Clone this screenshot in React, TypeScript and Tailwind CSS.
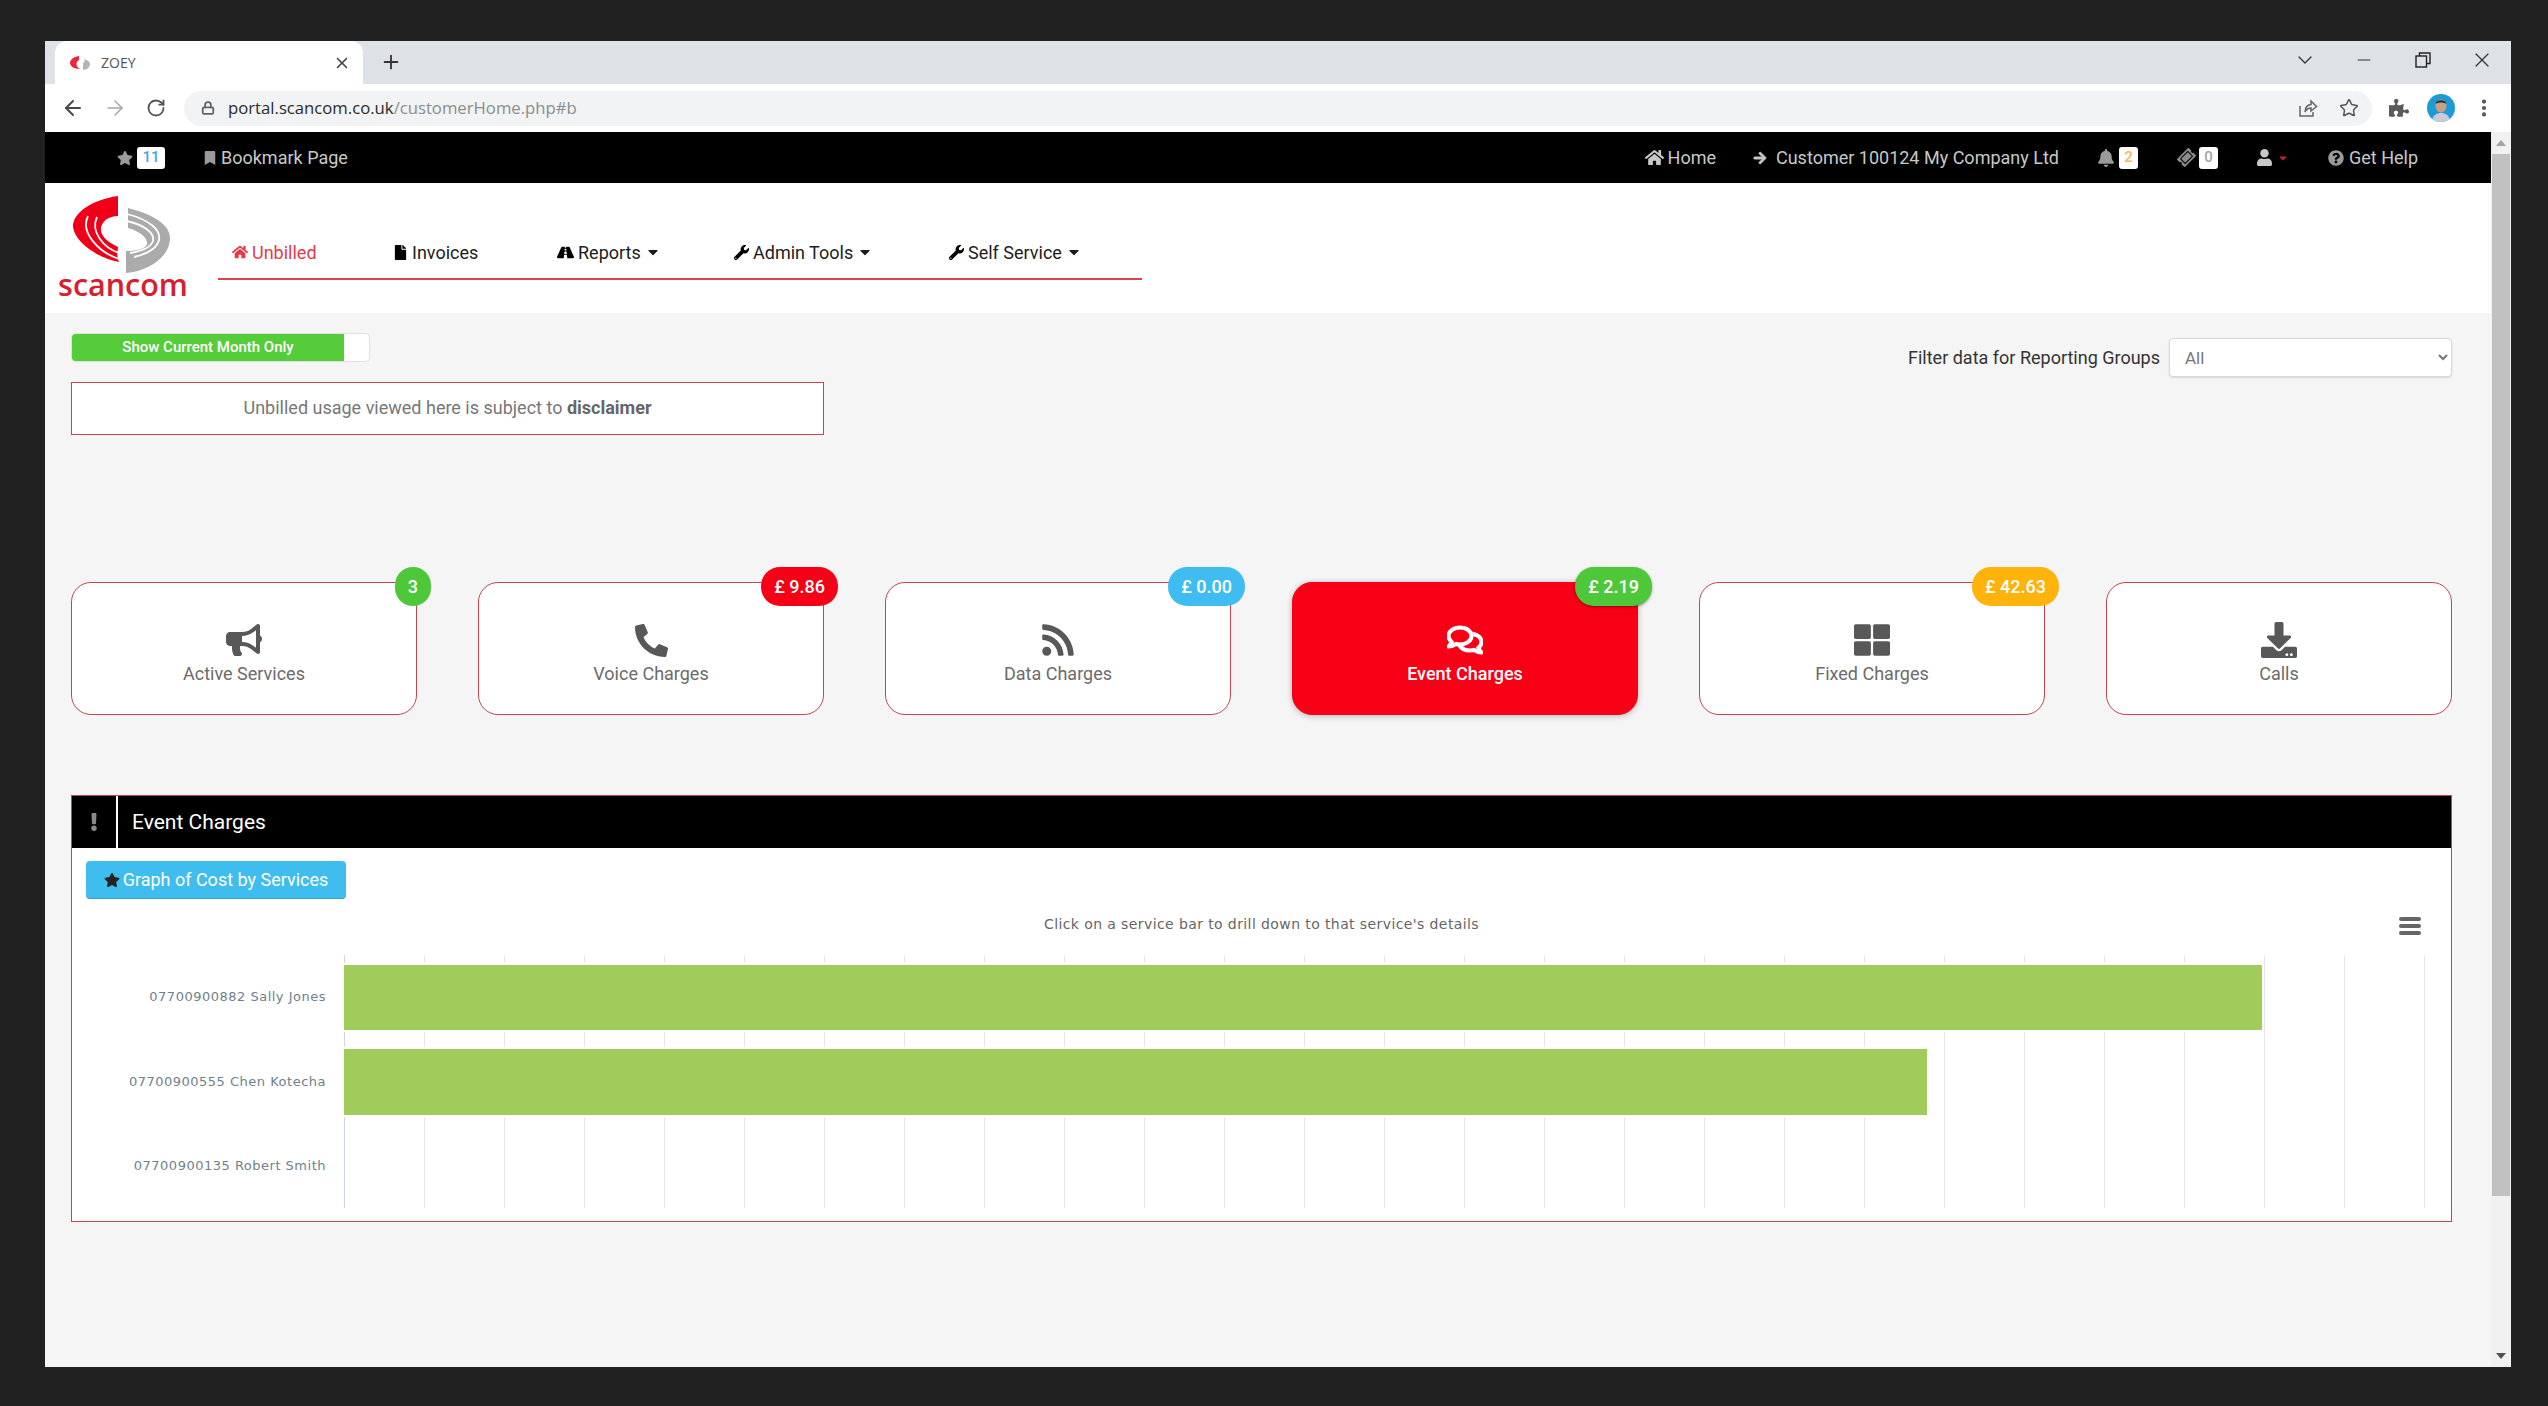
import React from "react";
import {
  FaStar, FaBookmark, FaHome, FaArrowRight, FaBell, FaTicketAlt, FaUser, FaCaretDown, FaQuestionCircle,
  FaFile, FaRoad, FaWrench, FaBullhorn, FaPhoneAlt, FaRss, FaRegComments, FaThLarge, FaDownload, FaPuzzlePiece, FaExclamation,
} from "react-icons/fa";
import { ArrowLeft, ArrowRight, RotateCw, Lock, Star, X, Plus, ChevronDown, Minus, EllipsisVertical } from "lucide-react";

function Logo() {
  return (
    <svg width="110" height="82" viewBox="18 4 110 82" className="block">
      <path d="M68 8 C40 12 23 26 23 38 C24 54 48 70 69 74 C66 68 68 62 68 59 C62 56 55 52 52 46 C48 38 55 28 68 28 Z" fill="#f00018" />
      <path d="M38 28 C30 44 48 64 69 71" fill="none" stroke="#fff" strokeWidth="1.8" />
      <path d="M47 29 C40 44 54 60 69 65" fill="none" stroke="#fff" strokeWidth="1.8" />
      <path d="M76 85 L76 63 C84 63 92 62 96 58 C100 52 92 44 78 40 L78 20 C102 26 120 36 120 50 C120 68 100 83 76 85 Z" fill="#ababab" />
      <path d="M77 26 C100 32 111 42 109 52 C107 60 97 66 84 69" fill="none" stroke="#fff" strokeWidth="1.8" />
      <path d="M77 33 C94 37 105 45 103 53 C101 59 92 63 80 65" fill="none" stroke="#fff" strokeWidth="1.8" />
    </svg>
  );
}

function Favicon() {
  return (
    <svg width="22" height="16" viewBox="0 0 22 16">
      <path d="M9 1 C3 2 0 5 0 8 C0 11 4 14 10 14 C6 12 5 7 9 5 Z" fill="#ef2436" />
      <path d="M13 15 L13 8 C15 7 15 5 14 4 C18 5 20 7 20 9 C20 12 17 15 13 15 Z" fill="#b5b5b5" />
    </svg>
  );
}

function CountBadge({ text, color }: { text: string; color: string }) {
  return (
    <span className={`flex h-[22px] min-w-[19px] items-center justify-center rounded-[3px] bg-white px-[4px] text-[15px] leading-none font-medium ${color}`}>
      {text}
    </span>
  );
}

function NavItem({ icon, label, caret, width, active }: { icon: React.ReactNode; label: string; caret?: boolean; width: string; active?: boolean }) {
  return (
    <div className={`flex items-center gap-[4px] text-[18px] ${width} ${active ? "text-[#e53a48]" : "text-[#1c1c1c]"}`}>
      {icon}
      <span>{label}</span>
      {caret && <FaCaretDown className="text-[16px]" />}
    </div>
  );
}

const cards = [
  { label: "Active Services", icon: <FaBullhorn />, badge: "3", badgeColor: "bg-[#4fc73a]" },
  { label: "Voice Charges", icon: <FaPhoneAlt className="text-[33px]" />, badge: "£ 9.86", badgeColor: "bg-[#f50016]" },
  { label: "Data Charges", icon: <FaRss />, badge: "£ 0.00", badgeColor: "bg-[#3fbdf0]" },
  { label: "Event Charges", icon: <FaRegComments stroke="currentColor" strokeWidth={18} />, badge: "£ 2.19", badgeColor: "bg-[#4fc73a]", active: true },
  { label: "Fixed Charges", icon: <FaThLarge />, badge: "£ 42.63", badgeColor: "bg-[#ffb30b]" },
  { label: "Calls", icon: <FaDownload />, badge: "", badgeColor: "" },
];

function Card({ c }: { c: (typeof cards)[number] }) {
  return (
    <div
      className={`relative flex h-[133px] flex-col items-center justify-center rounded-[20px] border-[1.5px] pt-[10px] ${
        c.active
          ? "border-[#f80016] bg-[#f80016] text-white font-medium shadow-[0_1px_6px_rgba(0,0,0,0.25)]"
          : "border-[#c8434f] bg-white text-[#6b6b6b]"
      }`}
    >
      <div className={`flex h-[36px] items-center justify-center text-[36px] ${c.active ? "text-white" : "text-[#585858]"}`}>{c.icon}</div>
      <div className="mt-[5px] text-[18px] leading-[22px]">{c.label}</div>
      {c.badge && (
        <div className={`absolute top-[-16px] right-[-15px] flex h-[39px] items-center justify-center rounded-[19px] px-[13px] text-[18px] font-medium text-white ${c.badgeColor} ${c.active ? "shadow-[0_1px_3px_rgba(0,0,0,0.4)]" : ""}`}>
          {c.badge}
        </div>
      )}
    </div>
  );
}

function Chart() {
  const lines = Array.from({ length: 27 }, (_, i) => i * 80 + 0.5);
  return (
    <svg width="2090" height="253" viewBox="0 0 2090 253" className="block">
      {lines.map((x, i) => (
        <line key={x} x1={x} x2={x} y1="0" y2="253" stroke={i === 0 ? "#ccd6eb" : "#e6e6e6"} strokeWidth="1" />
      ))}
      <rect x="-1" y="9" width="1920" height="67" fill="#a0cc5c" stroke="#fff" strokeWidth="2" />
      <rect x="-1" y="93" width="1585" height="68" fill="#a0cc5c" stroke="#fff" strokeWidth="2" />
    </svg>
  );
}

export default function App() {
  const labels = ["07700900882 Sally Jones", "07700900555 Chen Kotecha", "07700900135 Robert Smith"];
  return (
    <div className="h-[1406px] w-[2548px] overflow-hidden bg-[#212121] pt-[41px] pl-[45px] font-['Roboto',sans-serif]">
      <div className="flex h-[1326px] w-[2466px] flex-col overflow-hidden bg-white">
        {/* tab strip */}
        <div className="flex h-[43px] shrink-0 items-end bg-[#dee1e6] pl-[10px]">
          <div className="flex h-[43px] w-[308px] items-center rounded-t-[12px] bg-white pr-[12px] pl-[15px]">
            <Favicon />
            <span className="ml-[9px] font-['Open_Sans',sans-serif] text-[14px] text-[#555]">ZOEY</span>
            <X className="ml-auto text-[#444]" size={18} strokeWidth={2.2} />
          </div>
          <Plus className="mb-[11px] ml-[17px] text-[#333]" size={22} strokeWidth={2} />
          <div className="ml-auto flex h-full items-center pb-[6px] text-[#333]">
            <div className="flex w-[59px] justify-center"><ChevronDown size={24} strokeWidth={1.3} /></div>
            <div className="flex w-[59px] justify-center"><Minus size={20} strokeWidth={1.4} /></div>
            <div className="flex w-[59px] justify-center">
              <svg width="16" height="16" viewBox="0 0 16 16" fill="none" stroke="#222" strokeWidth="1.4">
                <rect x="1" y="4" width="10.5" height="11" />
                <path d="M4.5 4 V1 H15 V11.5 H11.5" />
              </svg>
            </div>
            <div className="flex w-[59px] justify-center"><X size={24} strokeWidth={1.2} /></div>
          </div>
        </div>
        {/* toolbar */}
        <div className="flex h-[48px] shrink-0 items-center bg-white pr-[16px] pl-[16px] text-[#5f6368]">
          <ArrowLeft size={24} strokeWidth={2} className="text-[#4a4a4a]" />
          <ArrowRight size={24} strokeWidth={1.6} className="ml-[18px] text-[#a8a8a8]" />
          <RotateCw size={20} strokeWidth={2.2} className="ml-[19px] text-[#555]" />
          <div className="ml-[18px] flex h-[35px] flex-1 items-center rounded-full bg-[#f1f3f4] pr-[13px] pl-[17px]">
            <Lock size={14} strokeWidth={3} className="text-[#5f6368]" />
            <span className="ml-[13px] font-['Open_Sans',sans-serif] text-[16.7px] leading-none text-[#8a8d91]">
              <span className="text-[#2b2b2b]">portal.scancom.co.uk</span>/customerHome.php#b
            </span>
            <svg width="20" height="20" viewBox="0 0 20 20" fill="none" stroke="#666" strokeWidth="1.5" className="ml-auto">
              <path d="M2 8 V18 H15 V14" />
              <path d="M7 14 C7 9 10 6.5 13 6.5 V3 L18.5 8.5 L13 13 V10 C10.5 10 8.5 11 7 14 Z" />
            </svg>
            <Star size={20} strokeWidth={1.8} className="ml-[21px] text-[#555]" />
          </div>
          <FaPuzzlePiece className="ml-[17px] text-[#5a5a5a]" size={20} />
          <div className="ml-[18px] flex h-[28px] w-[28px] items-end justify-center overflow-hidden rounded-full bg-[#1d9bd6]">
            <svg width="28" height="28" viewBox="0 0 28 28">
              <ellipse cx="14" cy="12" rx="5.5" ry="6.5" fill="#c99f86" />
              <path d="M8.5 10 C9 5 19 5 19.5 10 C17 8 11 8 8.5 10 Z" fill="#2b2b2b" />
              <path d="M5 28 C5 21 10 19 14 19 C18 19 23 21 23 28 Z" fill="#c9ccd6" />
            </svg>
          </div>
          <EllipsisVertical className="ml-[18px] text-[#555]" size={22} strokeWidth={2.6} />
        </div>
        {/* page */}
        <div className="flex min-h-0 flex-1">
          <div className="flex w-[2446px] flex-col bg-[#f5f5f5]">
            {/* black bar */}
            <div className="flex h-[51px] shrink-0 items-center justify-between bg-black pr-[73px] pl-[72px] text-[18px] text-[#c8c8c8]">
              <div className="flex items-center">
                <FaStar size={16} className="text-[#9a9a9a]" />
                <span className="ml-[4px]"><CountBadge text="11" color="text-[#3fa9dc] min-w-[28px]" /></span>
                <FaBookmark size={14} className="ml-[38px] text-[#9a9a9a]" />
                <span className="ml-[4px]">Bookmark Page</span>
              </div>
              <div className="flex items-center">
                <FaHome size={19} className="text-[#c8c8c8]" />
                <span className="ml-[4px]">Home</span>
                <FaArrowRight size={14} stroke="currentColor" strokeWidth={30} className="ml-[37px]" />
                <span className="ml-[9px]">Customer 100124 My Company Ltd</span>
                <FaBell size={18} className="ml-[38px] text-[#9a9a9a]" />
                <span className="ml-[4px]"><CountBadge text="2" color="text-[#f0bc5a]" /></span>
                <FaTicketAlt size={17} className="ml-[40px] -rotate-45 text-[#8a8a8a]" />
                <span className="ml-[4px]"><CountBadge text="0" color="text-[#a5a5a5]" /></span>
                <FaUser size={17} className="ml-[38px] text-[#c8c8c8]" />
                <FaCaretDown size={12} className="ml-[4px] text-[#c0213a]" />
                <FaQuestionCircle size={16} className="ml-[39px] text-[#9a9a9a]" />
                <span className="ml-[5px]">Get Help</span>
              </div>
            </div>
            {/* logo + nav */}
            <div className="flex h-[130px] shrink-0 items-start bg-white pl-[13px]">
              <div className="flex w-[130px] flex-col items-center pt-[9px]">
                <Logo />
                <span className="-mt-[7px] font-['Open_Sans',sans-serif] text-[30.5px] leading-[34px] font-semibold text-[#d7202f]">scancom</span>
              </div>
              <div className="mt-[47px] ml-[30px] flex h-[50px] w-[924px] items-center border-b-2 border-[#d84654] pb-[4px] pl-[14px]">
                <NavItem width="w-[161px]" active label="Unbilled" icon={<FaHome size={16} />} />
                <NavItem width="w-[164px]" label="Invoices" icon={<FaFile size={15} className="text-black" />} />
                <NavItem width="w-[177px]" label="Reports" caret icon={<FaRoad size={17} className="text-black" />} />
                <NavItem width="w-[215px]" label="Admin Tools" caret icon={<FaWrench size={15} className="text-black" />} />
                <NavItem width="w-[140px]" label="Self Service" caret icon={<FaWrench size={15} className="text-black" />} />
              </div>
            </div>
            {/* content */}
            <div className="flex-1 pr-[39px] pl-[26px] text-[#777]">
              <div className="flex justify-between">
                <div className="w-[753px] pt-[20px]">
                  <div className="flex h-[29px] w-[299px] overflow-hidden rounded-[4px] border border-[#e0e0e0] bg-white">
                    <div className="flex w-[272px] items-center justify-center rounded-l-[3px] bg-[#55cc3a] text-[15px] font-medium text-white">Show Current Month Only</div>
                  </div>
                  <div className="mt-[20px] flex h-[53px] items-center justify-center border-[1.5px] border-[#c8434f] bg-white pb-[2px] text-[18px]">
                    <span>Unbilled usage viewed here is subject to <b className="font-bold text-[#666]">disclaimer</b></span>
                  </div>
                </div>
                <div className="flex items-center gap-[9px] self-start pt-[25px]">
                  <span className="text-[18px] text-[#333]">Filter data for Reporting Groups</span>
                  <select className="h-[39px] w-[283px] rounded-[4px] border border-[#d8d8d8] bg-white pl-[11px] text-[17px] text-[#777] shadow-[0_1px_2px_rgba(0,0,0,0.12)]">
                    <option>All</option>
                  </select>
                </div>
              </div>
              <div className="mt-[147px] grid grid-cols-6 gap-[61px]">
                {cards.map((c) => (
                  <Card key={c.label} c={c} />
                ))}
              </div>
              {/* panel */}
              <div className="mt-[80px] h-[427px] border-[1.5px] border-[#c8434f] bg-white">
                <div className="flex h-[52px] items-stretch bg-black">
                  <div className="flex w-[44px] items-center justify-center text-[#8a8a8a]"><FaExclamation size={18} /></div>
                  <div className="w-[2px] bg-white" />
                  <div className="ml-[14px] flex items-center pt-[1px] text-[21px] text-white">Event Charges</div>
                </div>
                <div className="pt-[13px]">
                  <div className="pl-[14px]">
                    <div className="flex h-[38px] w-[260px] items-center justify-center gap-[3px] rounded-[4px] border-b border-[#35a3d0] bg-[#3fbdee] text-[18px] text-white">
                      <FaStar size={16} className="text-[#222]" />
                      <span>Graph of Cost by Services</span>
                    </div>
                  </div>
                  <div className="relative flex h-[48px] items-center justify-center pt-[2px] font-['DejaVu_Sans',sans-serif] text-[14px] tracking-[0.4px] text-[#666]">
                    <span>Click on a service bar to drill down to that service's details</span>
                    <div className="absolute top-[18px] right-[30px] flex w-[22px] flex-col gap-[3px]">
                      <div className="h-[4px] rounded-[2px] bg-[#666]" />
                      <div className="h-[4px] rounded-[2px] bg-[#666]" />
                      <div className="h-[4px] rounded-[2px] bg-[#666]" />
                    </div>
                  </div>
                  <div className="mt-[8px] flex">
                    <div className="grid h-[253px] w-[272px] shrink-0 grid-rows-3 pr-[18px] font-['DejaVu_Sans',sans-serif] text-[13px] tracking-[0.5px] text-[#6f7f8e]">
                      {labels.map((l) => (
                        <div key={l} className="flex items-center justify-end">{l}</div>
                      ))}
                    </div>
                    <Chart />
                  </div>
                </div>
              </div>
            </div>
          </div>
          {/* scrollbar */}
          <div className="flex w-[20px] flex-col items-center bg-[#f1f1f1]">
            <div className="flex h-[22px] items-center justify-center">
              <div className="h-0 w-0 border-x-[5px] border-b-[6px] border-x-transparent border-b-[#a3a3a3]" />
            </div>
            <div className="h-[1042px] w-[18px] bg-[#c1c1c1]" />
            <div className="mt-auto flex h-[22px] items-center justify-center">
              <div className="h-0 w-0 border-x-[5px] border-t-[6px] border-x-transparent border-t-[#505050]" />
            </div>
          </div>
        </div>
      </div>
    </div>
  );
}
